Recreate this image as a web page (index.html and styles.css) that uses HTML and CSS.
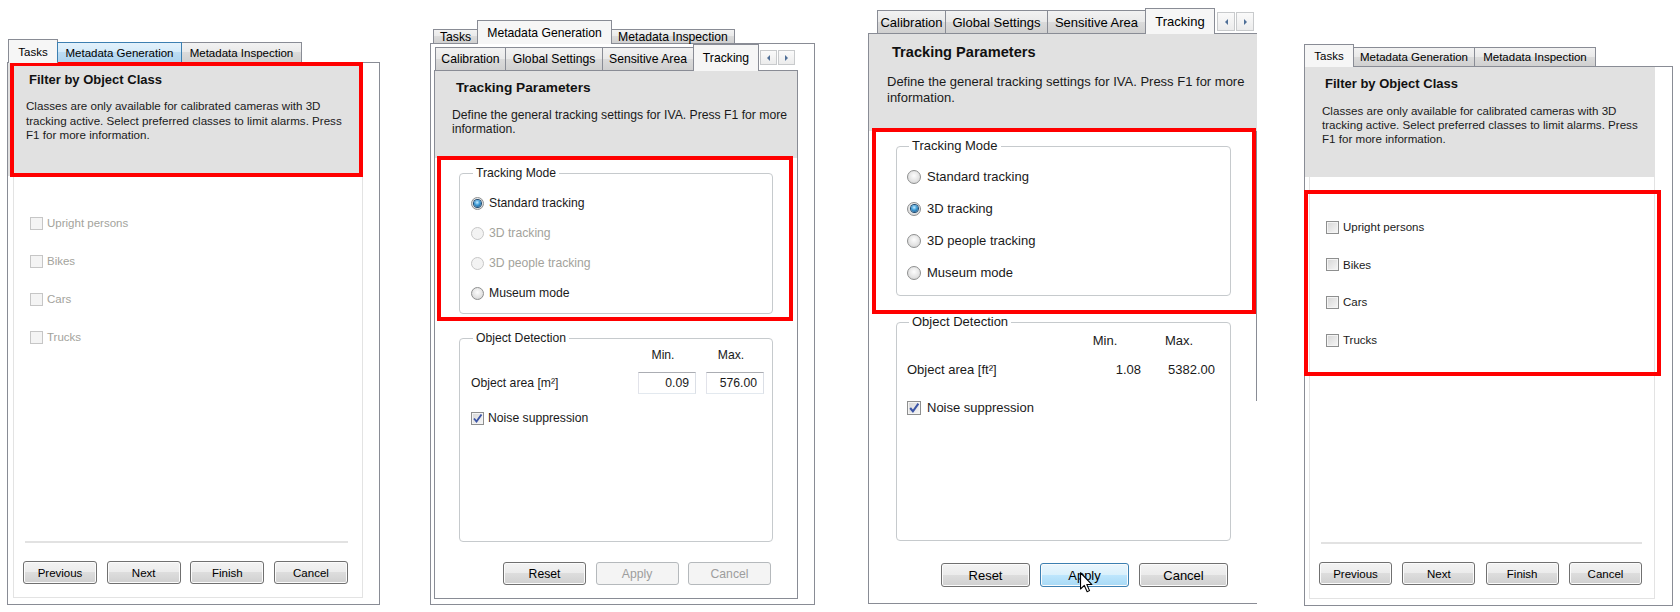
FILE: index.html
```html
<!DOCTYPE html>
<html lang="en">
<head>
    <meta charset="utf-8" />
    <meta name="viewport" content="width=device-width, initial-scale=1" />
    <title>IVA Wizard Pages</title>
    <link rel="stylesheet" href="styles.css">
</head>
<body>
<div class="strip">

    <!-- Tasks / Filter by Object Class, classes greyed out -->
    <section class="shot shot-a">
        <div class="tabs">
            <span class="tab sel t-tasks">Tasks</span>
            <span class="tab hot t-gen">Metadata Generation</span>
            <span class="tab t-insp">Metadata Inspection</span>
        </div>
        <div class="frame">
            <div class="head">
                <h2>Filter by Object Class</h2>
                <p>Classes are only available for calibrated cameras with 3D<br>tracking active. Select preferred classes to limit alarms. Press<br>F1 for more information.</p>
            </div>
            <div class="body">
                <ul class="classes">
                    <li class="off"><span class="cb"></span>Upright persons</li>
                    <li class="off"><span class="cb"></span>Bikes</li>
                    <li class="off"><span class="cb"></span>Cars</li>
                    <li class="off"><span class="cb"></span>Trucks</li>
                </ul>
                <div class="foot">
                    <div class="rule"></div>
                    <div class="wizard">
                        <button class="btn">Previous</button>
                        <button class="btn">Next</button>
                        <button class="btn">Finish</button>
                        <button class="btn">Cancel</button>
                    </div>
                </div>
            </div>
        </div>
        <div class="mark"></div>
    </section>

    <!-- Metadata Generation / Tracking, 2D calibration -->
    <section class="shot shot-b">
        <div class="tabs">
            <span class="tab t-tasks">Tasks</span>
            <span class="tab sel t-gen">Metadata Generation</span>
            <span class="tab t-insp">Metadata Inspection</span>
        </div>
        <div class="frame">
            <div class="tabs sub">
                <span class="tab t-cal">Calibration</span>
                <span class="tab t-glob">Global Settings</span>
                <span class="tab t-area">Sensitive Area</span>
                <span class="tab sel t-track">Tracking</span>
                <span class="spin"><i class="prev"></i><i class="next"></i></span>
            </div>
            <div class="page">
                <div class="head">
                    <h2>Tracking Parameters</h2>
                    <p>Define the general tracking settings for IVA. Press F1 for more<br>information.</p>
                </div>
                <fieldset class="group mode">
                    <legend>Tracking Mode</legend>
                    <label class="opt"><span class="rb on"></span>Standard tracking</label>
                    <label class="opt off"><span class="rb"></span>3D tracking</label>
                    <label class="opt off"><span class="rb"></span>3D people tracking</label>
                    <label class="opt"><span class="rb"></span>Museum mode</label>
                </fieldset>
                <fieldset class="group detect">
                    <legend>Object Detection</legend>
                    <div class="area">
                        <span></span><span class="col">Min.</span><span class="col">Max.</span>
                        <span>Object area [m²]</span><span class="field">0.09</span><span class="field">576.00</span>
                    </div>
                    <label class="opt noise"><span class="cb on"><svg viewBox="0 0 11 11"><path d="M2 5.5 L4.5 8.5 L9.5 1.5"/></svg></span>Noise suppression</label>
                </fieldset>
                <div class="actions">
                    <button class="btn">Reset</button>
                    <button class="btn" disabled>Apply</button>
                    <button class="btn" disabled>Cancel</button>
                </div>
            </div>
        </div>
        <div class="mark"></div>
    </section>

    <!-- Tracking page again, 3D calibration active -->
    <section class="shot shot-c">
        <div class="tabs sub">
            <span class="tab t-cal">Calibration</span>
            <span class="tab t-glob">Global Settings</span>
            <span class="tab t-area">Sensitive Area</span>
            <span class="tab sel t-track">Tracking</span>
            <span class="spin"><i class="prev"></i><i class="next"></i></span>
        </div>
        <div class="page">
            <div class="head">
                <h2>Tracking Parameters</h2>
                <p>Define the general tracking settings for IVA. Press F1 for more<br>information.</p>
            </div>
            <fieldset class="group mode">
                <legend>Tracking Mode</legend>
                <label class="opt"><span class="rb"></span>Standard tracking</label>
                <label class="opt"><span class="rb on"></span>3D tracking</label>
                <label class="opt"><span class="rb"></span>3D people tracking</label>
                <label class="opt"><span class="rb"></span>Museum mode</label>
            </fieldset>
            <fieldset class="group detect">
                <legend>Object Detection</legend>
                <div class="area">
                    <span></span><span class="col">Min.</span><span class="col">Max.</span>
                    <span>Object area [ft²]</span><span class="num">1.08</span><span class="num">5382.00</span>
                </div>
                <label class="opt noise"><span class="cb on"><svg viewBox="0 0 11 11"><path d="M2 5.5 L4.5 8.5 L9.5 1.5"/></svg></span>Noise suppression</label>
            </fieldset>
            <div class="actions">
                <button class="btn">Reset</button>
                <button class="btn hot">Apply</button>
                <button class="btn">Cancel</button>
            </div>
        </div>
        <svg class="pointer" viewBox="0 0 12 19" width="13" height="21">
            <path d="M0.5 0.5 L0.5 15.5 L4 12.2 L6.6 18 L8.8 17 L6.3 11.4 L11 11.4 Z" fill="#fff" stroke="#000" stroke-width="1" stroke-linejoin="round"/>
        </svg>
        <div class="mark"></div>
    </section>

    <!-- Tasks / Filter by Object Class, classes available -->
    <section class="shot shot-d">
        <div class="tabs">
            <span class="tab sel t-tasks">Tasks</span>
            <span class="tab t-gen">Metadata Generation</span>
            <span class="tab t-insp">Metadata Inspection</span>
        </div>
        <div class="frame">
            <div class="head">
                <h2>Filter by Object Class</h2>
                <p>Classes are only available for calibrated cameras with 3D<br>tracking active. Select preferred classes to limit alarms. Press<br>F1 for more information.</p>
            </div>
            <div class="body">
                <ul class="classes">
                    <li><span class="cb"></span>Upright persons</li>
                    <li><span class="cb"></span>Bikes</li>
                    <li><span class="cb"></span>Cars</li>
                    <li><span class="cb"></span>Trucks</li>
                </ul>
                <div class="foot">
                    <div class="rule"></div>
                    <div class="wizard">
                        <button class="btn">Previous</button>
                        <button class="btn">Next</button>
                        <button class="btn">Finish</button>
                        <button class="btn">Cancel</button>
                    </div>
                </div>
            </div>
        </div>
        <div class="mark"></div>
    </section>

</div>
</body>
</html>
```

FILE: styles.css
```css
* {
    box-sizing: border-box;
}

body {
    margin: 0;
    background-color: #fff;
    color: #1a1a1a;
    font-family: "Liberation Sans", Arial, sans-serif;
}

.strip {
    display: flex;
    align-items: flex-start;
    width: 1680px;
    height: 612px;
    overflow: hidden;
}

.shot {
    position: relative;
    flex: none;
}

.shot-a { margin: 39px 0 0 7px;  width: 373px; font-size: 11.5px; }
.shot-b { margin: 20px 0 0 50px; width: 385px; font-size: 12.2px; }
.shot-c { margin: 8px 0 0 53px;  width: 389px; font-size: 13px; }
.shot-d { margin: 44px 0 0 47px; width: 369px; font-size: 11.5px; }

/* ---- tab strips ---- */

.tabs {
    display: flex;
    align-items: flex-end;
}

.tab {
    flex: none;
    display: flex;
    align-items: center;
    justify-content: center;
    border: 1px solid #898c95;
    border-bottom: 0;
    background: linear-gradient(#f2f2f2, #e9e9e9 50%, #dbdbdb 50%, #d0d0d0);
    color: #000;
    white-space: nowrap;
}

.tab + .tab {
    margin-left: -1px;
}

.tab.sel {
    position: relative;
    z-index: 1;
    margin-bottom: -1px;
    background: #f6f6f6;
}

.tab.hot {
    position: relative;
    z-index: 1;
    border-color: #3c7fb1;
    background: linear-gradient(#e3f1fb, #d3eaf9 50%, #bcdcf3 50%, #aed3ee);
}

.shot-a .tabs { height: 23px; padding-left: 1px; }
.shot-a .tab { height: 20px; }
.shot-a .tab.sel { height: 24px; }
.shot-a .t-tasks { width: 50px; }
.shot-a .t-gen { width: 125px; }
.shot-a .t-insp { width: 121px; }

.shot-d .tabs { height: 22px; }
.shot-d .tab { height: 19px; }
.shot-d .tab.sel { height: 23px; }
.shot-d .t-tasks { width: 50px; }
.shot-d .t-gen { width: 122px; }
.shot-d .t-insp { width: 122px; }

.shot-b > .tabs { height: 23px; padding-left: 3px; }
.shot-b > .tabs .tab { height: 14px; }
.shot-b > .tabs .tab.sel { height: 24px; }
.shot-b .t-tasks { width: 45px; }
.shot-b .t-gen { width: 135px; }
.shot-b .t-insp { width: 124px; }

.shot-b .sub { height: 26px; padding-left: 1px; }
.shot-b .sub .tab { height: 23px; }
.shot-b .sub .tab.sel { height: 27px; }
.shot-b .t-cal { width: 71px; }
.shot-b .t-glob { width: 98px; }
.shot-b .t-area { width: 92px; }
.shot-b .t-track { width: 66px; }
.shot-b .spin { width: 35px; height: 15px; margin: 0 0 5px 1px; }

.shot-c .sub { height: 25px; padding-left: 9px; }
.shot-c .sub .tab { height: 23px; }
.shot-c .sub .tab.sel { height: 26px; }
.shot-c .t-cal { width: 69px; }
.shot-c .t-glob { width: 103px; }
.shot-c .t-area { width: 99px; }
.shot-c .t-track { width: 70px; }
.shot-c .spin { width: 37px; height: 19px; margin: 0 0 2px 2px; }

/* little left / right scroller at the end of the sub tabs */
.spin {
    display: flex;
    gap: 1px;
    flex: none;
}

.spin i {
    flex: 1;
    display: flex;
    align-items: center;
    justify-content: center;
    border: 1px solid #c8cacc;
    background: linear-gradient(#fafafa, #ececec);
}

.spin i::before {
    content: "";
    border-top: 3px solid transparent;
    border-bottom: 3px solid transparent;
}

.spin .prev::before { border-right: 3px solid #4f6f97; }
.spin .next::before { border-left: 3px solid #4f6f97; }

/* ---- frames and pages ---- */

.frame {
    display: flex;
    flex-direction: column;
    border: 1px solid #898c95;
    background-color: #fff;
}

.shot-a .frame { height: 543px; padding: 0 16px 6px 0; }
.shot-d .frame { height: 540px; padding: 0 17px 6px 0; }
.shot-b .frame { height: 562px; padding: 0 16px 5px 3px; }

.page {
    display: flex;
    flex-direction: column;
    border: 1px solid #898c95;
    background-color: #fff;
}

.shot-b .page { flex: 1; }

/* the right edge of this page is only drawn down to the object detection box */
.shot-c .page {
    height: 571px;
    border-right: 0;
    background: linear-gradient(#898c95, #898c95) right top / 1px 367px no-repeat, #fff;
}

.head {
    flex: none;
    background-color: #e1e1e1;
    white-space: nowrap;
}

.head h2 {
    margin: 0;
    font-weight: bold;
    color: #111;
}

.head p {
    margin: 0;
}

.shot-a .head { height: 113px; padding: 9px 0 0 18px; }
.shot-a .head h2 { margin-left: 3px; font-size: 13px; line-height: 16px; }
.shot-a .head p { margin-top: 11px; font-size: 11.6px; line-height: 14.5px; }

.shot-d .head { height: 110px; padding: 9px 0 0 17px; }
.shot-d .head h2 { margin-left: 3px; font-size: 13px; line-height: 16px; }
.shot-d .head p { margin-top: 12px; font-size: 11.6px; line-height: 14px; }

.shot-b .head { height: 87px; padding: 9px 0 0 17px; }
.shot-b .head h2 { margin-left: 4px; font-size: 13.7px; line-height: 16px; }
.shot-b .head p { margin-top: 12px; line-height: 14px; }

.shot-c .head { height: 97px; padding: 10px 0 0 18px; }
.shot-c .head h2 { margin-left: 5px; font-size: 14.6px; line-height: 17px; }
.shot-c .head p { margin-top: 13px; line-height: 16px; }

/* ---- class list page ---- */

.body {
    flex: 1;
    display: flex;
    flex-direction: column;
    border: 1px solid #e3e3e3;
    border-top: 0;
}

.shot-a .body { margin-left: 5px; }
.shot-d .body { margin-left: 4px; }

.classes {
    margin: 0;
    list-style: none;
}

.classes li {
    display: flex;
    align-items: center;
    height: 16px;
}

.shot-a .classes { padding: 39px 0 0 16px; }
.shot-a .classes li { margin-bottom: 22px; }
.shot-d .classes { padding: 42px 0 0 16px; }
.shot-d .classes li { margin-bottom: 21.7px; }

.off {
    color: #a3a39c;
}

.foot {
    margin-top: auto;
}

.shot-a .foot { padding: 0 14px 13px 9px; }
.shot-d .foot { padding: 0 12px 13px 9px; }

.rule {
    height: 2px;
    margin: 0 0 18px 2px;
    background-color: #e2e2e2;
}

.wizard {
    display: flex;
    justify-content: space-between;
}

.shot-a .wizard .btn { width: 74px; height: 23px; }
.shot-d .wizard .btn { width: 73px; height: 23px; }

/* ---- group boxes ---- */

.group {
    min-width: 0;
    border: 1px solid #c6cacd;
    border-radius: 4px;
}

.group legend {
    padding: 0 3px;
    margin-left: 2px;
    color: #1a1a1a;
}

.opt {
    display: flex;
    align-items: center;
}

.col {
    text-align: center;
    padding-right: 8px;
}

.num {
    text-align: right;
}

.field {
    display: block;
    height: 22px;
    padding-right: 6px;
    border: 1px solid #abadb3;
    border-color: #abadb3 #dbdfe6 #e3e9ef #e2e3ea;
    line-height: 20px;
    text-align: right;
    background-color: #fff;
}

.area {
    display: grid;
    align-items: center;
}

.shot-b .group legend { line-height: 14px; }
.shot-b .mode { height: 148px; margin: 8px 24px 0; padding: 15px 0 0 11px; }
.shot-b .mode .opt { height: 16px; margin-bottom: 14px; }
.shot-b .detect { height: 211px; margin: 17px 24px 0; padding: 2px 8px 0 11px; }
.shot-b .area { grid-template-columns: 1fr 58px 58px; grid-template-rows: 16px 22px; gap: 9px 10px; }
.shot-b .noise { height: 16px; margin-top: 16px; }
.shot-b .rb { margin-right: 5px; }

.shot-c .group legend { line-height: 16px; }
.shot-c .mode { height: 158px; margin: 7px 26px 0 27px; padding: 14px 0 0 10px; }
.shot-c .mode .opt { height: 17px; margin-bottom: 15px; }
.shot-c .detect { height: 227px; margin: 18px 26px 0 27px; padding: 2px 15px 0 10px; }
.shot-c .area { grid-template-columns: 1fr 64px 64px; grid-template-rows: 17px 17px; gap: 12px 10px; }
.shot-c .noise { height: 17px; margin-top: 21px; }
.shot-c .rb { width: 14px; height: 14px; margin-right: 6px; }
.shot-c .cb { width: 14px; height: 14px; margin-right: 6px; }

/* ---- radio buttons and check boxes ---- */

.rb {
    flex: none;
    display: flex;
    align-items: center;
    justify-content: center;
    width: 13px;
    height: 13px;
    border: 1px solid #8e8f8f;
    border-radius: 50%;
    background: radial-gradient(circle at 50% 40%, #fdfdfd, #e2e2e2 60%, #cbcbcb);
}

.rb.on::after {
    content: "";
    width: 7px;
    height: 7px;
    border-radius: 50%;
    background: radial-gradient(circle at 45% 35%, #c6ecff, #3c9ad6 45%, #12456f);
    box-shadow: 0 0 0 1px #1d4a72;
}

.off .rb {
    border-color: #c7c7c7;
    background: #f3f3f3;
}

.cb {
    flex: none;
    display: flex;
    width: 13px;
    height: 13px;
    margin-right: 4px;
    border: 1px solid #8e8f8f;
    background: linear-gradient(135deg, #d6d6d6, #f7f7f7);
    box-shadow: inset 0 0 0 1px #f4f4f4;
}

.off .cb {
    border-color: #c6c6c6;
    background: #f4f4f4;
    box-shadow: none;
}

.cb svg {
    width: 100%;
    height: 100%;
}

.cb path {
    fill: none;
    stroke: #3c55a6;
    stroke-width: 1.9;
}

/* ---- push buttons ---- */

.btn {
    flex: none;
    padding: 0;
    font: inherit;
    color: #000;
    border: 1px solid #707070;
    border-radius: 3px;
    background: linear-gradient(#f3f3f3, #ebebeb 50%, #dddddd 50%, #d0d0d0);
    box-shadow: inset 0 0 0 1px #fbfbfb;
}

.btn:disabled {
    color: #9d9d9d;
    border-color: #b5b9bc;
    background: #f4f4f4;
    box-shadow: none;
}

.btn.hot {
    border-color: #3c7fb1;
    background: linear-gradient(#eaf6fd, #d9f0fc 50%, #bee6fd 50%, #a7d9f5);
}

.actions {
    display: flex;
    justify-content: flex-end;
}

.shot-b .actions { gap: 9.5px; margin-top: 20px; padding-right: 26px; }
.shot-b .actions .btn { width: 83px; height: 23px; }
.shot-c .actions { gap: 10px; margin-top: 22px; padding-right: 29px; }
.shot-c .actions .btn { width: 89px; height: 24px; }

/* ---- overlays ---- */

.mark {
    position: absolute;
    border: 4px solid #ff0000;
}

.shot-a .mark { left: 3px; top: 23px; width: 353px; height: 115px; }
.shot-b .mark { left: 7px; top: 136px; width: 356px; height: 165px; }
.shot-c .mark { left: 4px; top: 120px; width: 384px; height: 186px; }
.shot-d .mark { left: 0; top: 146px; width: 357px; height: 186px; }

.pointer {
    position: absolute;
    left: 212px;
    top: 564px;
}
```
